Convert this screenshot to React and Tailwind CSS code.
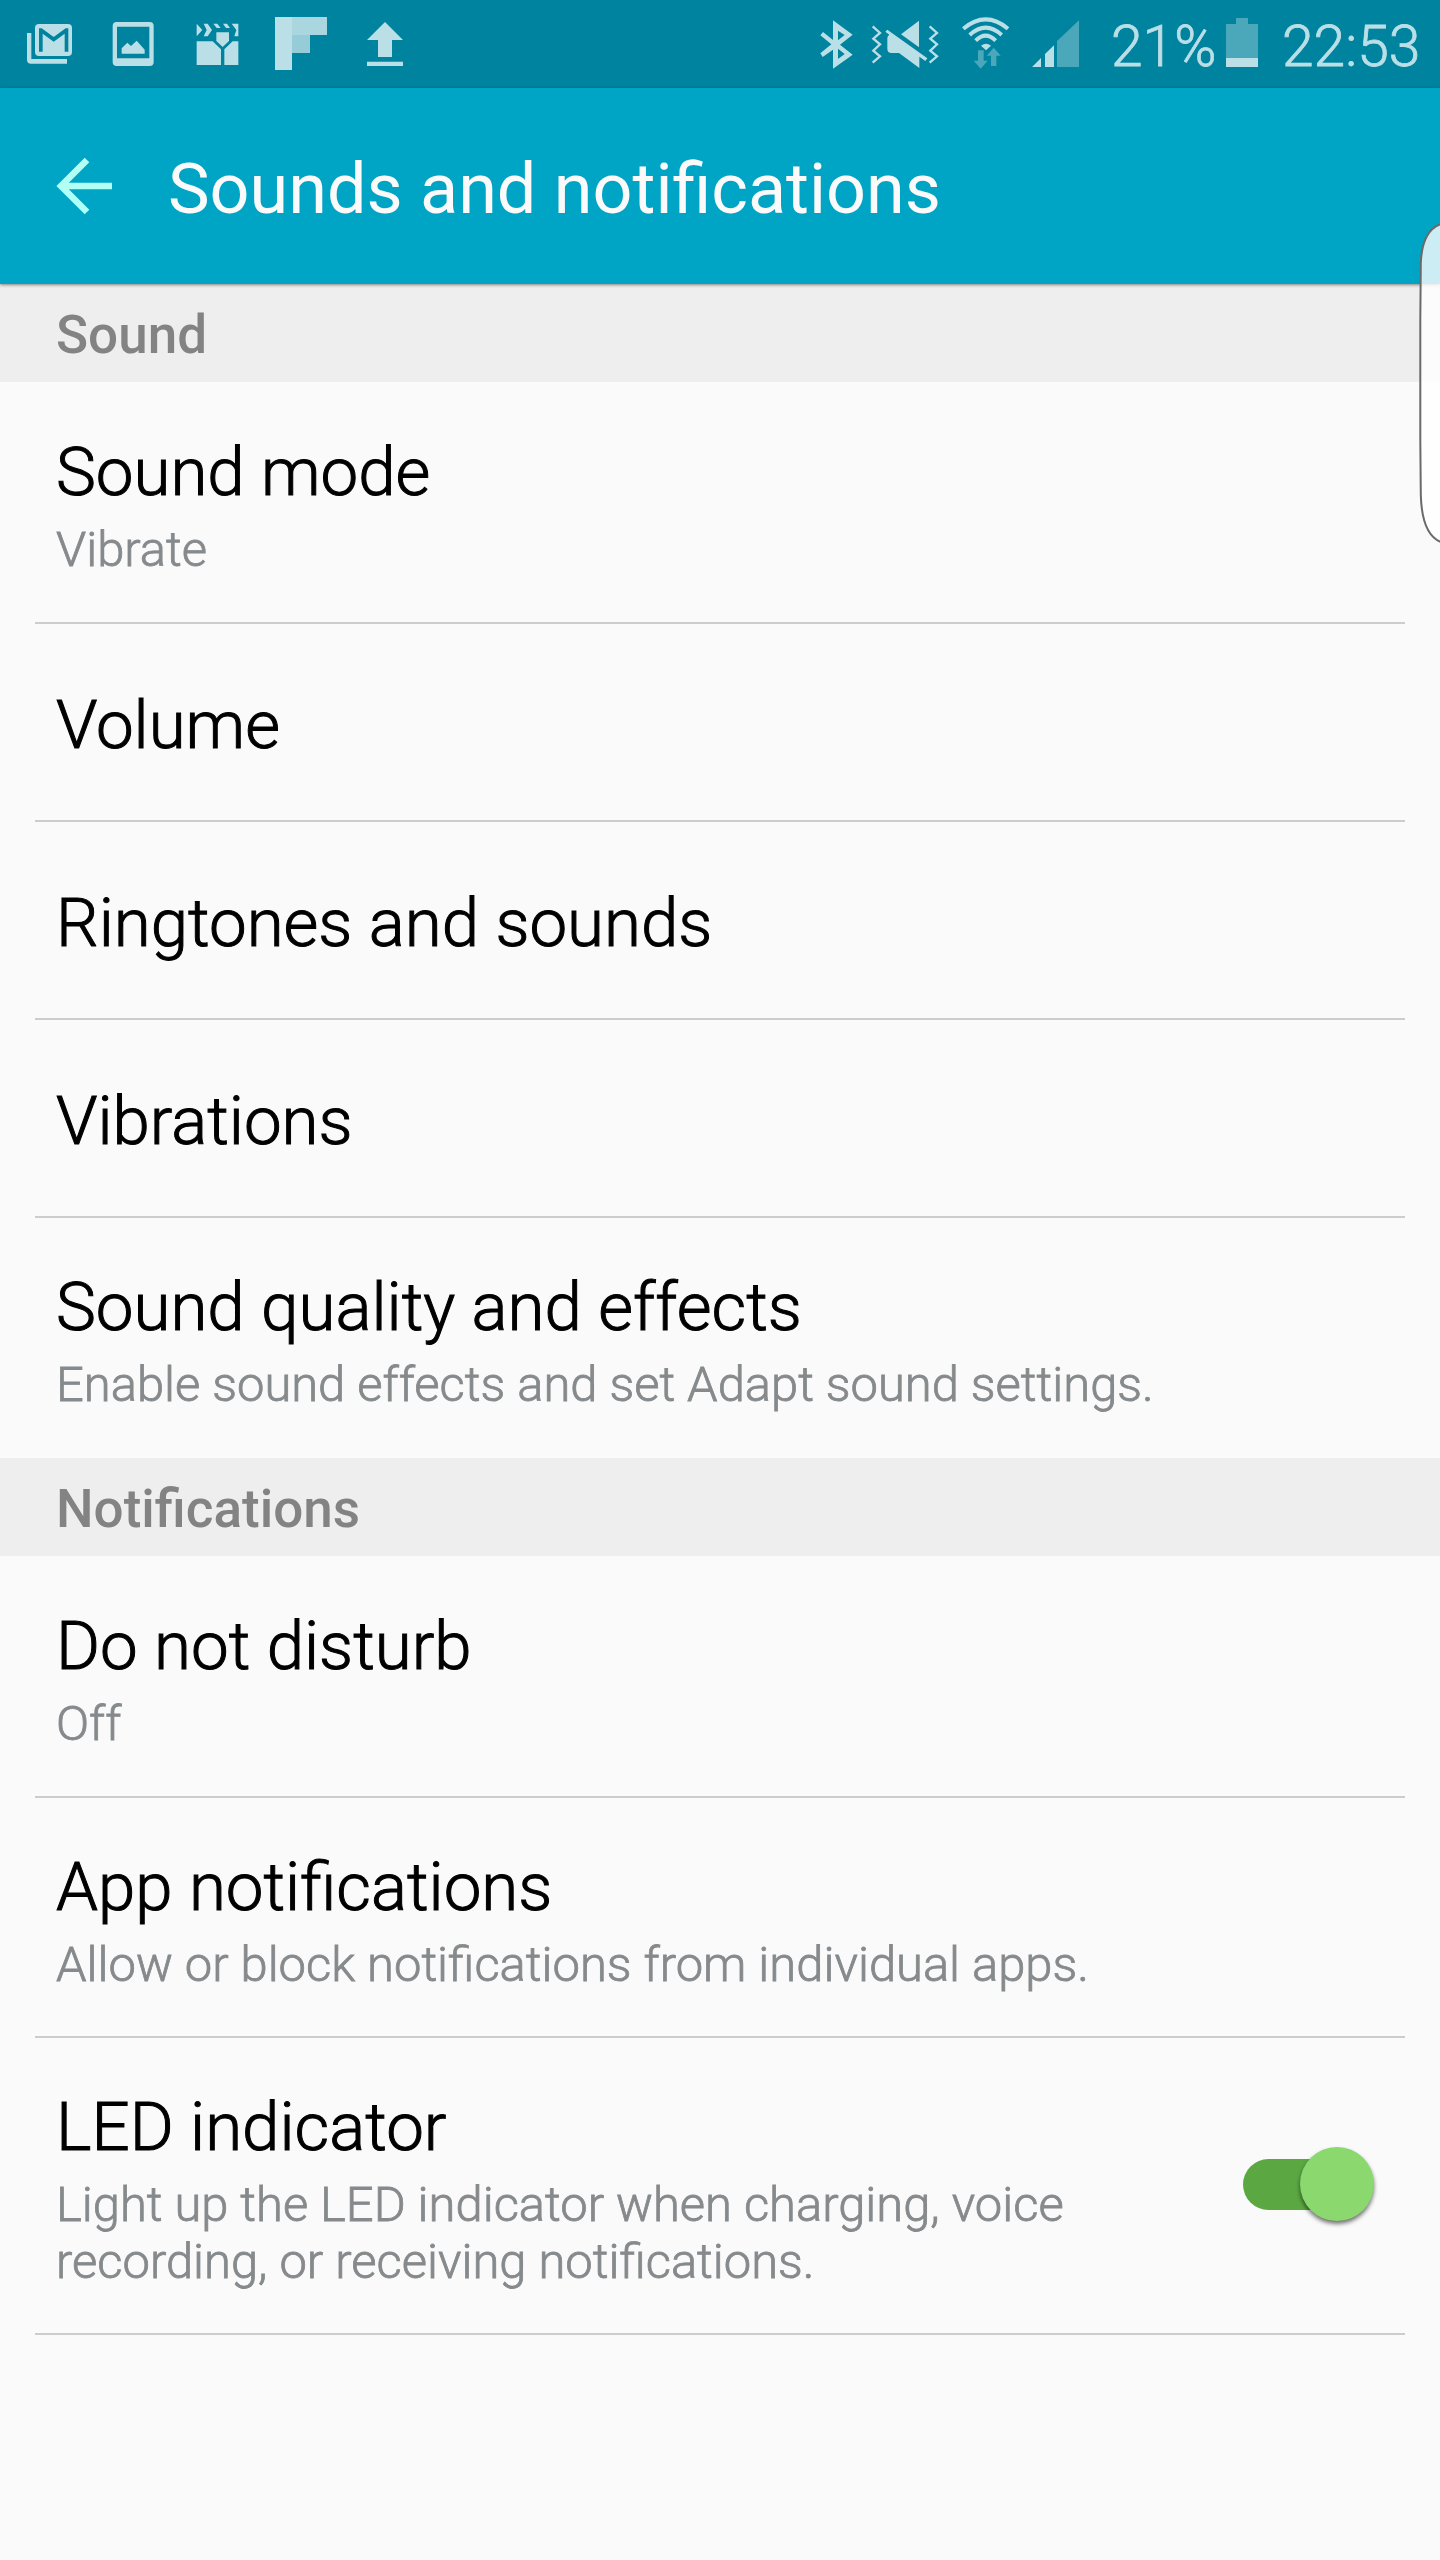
function StatusBar() {
  return (
    <div className="flex h-22 items-center bg-[#00839f] text-[#bbdfe6]">
      <svg className="shrink-0" width="440" height="88" viewBox="0 0 1320 264" fill="currentColor">
        {/* gmail */}
        <path d="M81 99h13v78h107v14H93q-12 0-12-12z" />
        <path fillRule="evenodd" d="M117 72h87q12 0 12 12v72q0 12-12 12h-87q-12 0-12-12V84q0-12 12-12zm0 13v70h11V101l33 24 33-24v54h11V85h-8l-36 26-36-26z" />
        {/* picture */}
        <path fillRule="evenodd" d="M350 66h99q12 0 12 12v108q0 12-12 12h-99q-12 0-12-12V78q0-12 12-12zm1 14v95h97V80z" />
        <path d="M365 161v-16l17-17 11 10 17-16 24 27v12z" />
        {/* movie edit */}
        <path d="M590 71l17 19-17 19zM611 71h12l13 19-13 19h-12l9-19zM640 71h12l10 13h-12zM669 71h12l9 13h-12zM695 71h20v38h-12l6-19zM649 97h38v26l-19 18-19-18zM590 124h48l25 24v47h-73zM715 124h-17l-25 24v47h42z" />
        {/* flipboard */}
        <path d="M825 51h51v159h-51z" />
        <path d="M876 51h105v54H876z" opacity=".9" />
        <path d="M876 105h54v54h-54z" opacity=".8" />
        {/* upload */}
        <path d="M1155 66l54 54h-33v51h-42v-51h-33zM1101 185h108v13h-108z" />
      </svg>
      <svg className="ml-[373px] shrink-0" width="290" height="88" viewBox="39 0 870 264" fill="currentColor">
        {/* bluetooth */}
        <path fillRule="evenodd" d="M99 61l59 43-38 30 38 30-59 42v-57l-31 22-7-11 33-27-33-27 8-10 30 24zm15 31v29l20-16zm0 54v31l20-15z" />
        {/* muted with vibration */}
        <path d="M218 79l22 20-20 17 20 17-20 19 20 17-22 19M389 79l22 20-20 17 20 17-20 19 20 17-22 19" fill="none" stroke="currentColor" strokeWidth="7" />
        <path d="M357 62v80l-54-39zM262 89l120 86-6 8-18-13v34l-61-45h-22q-13 0-13-13v-31q0-7 6-11l-12-9z" />
        {/* wifi */}
        <g fill="none" stroke="currentColor" strokeWidth="12">
          <path d="M490 86q67-56 134 0M509 105q48-44 96 0M527 122q30-30 60 0" />
        </g>
        <path d="M543 137q15-12 30 0l-15 14z" />
        <path d="M534 151h17v31h12l-21 24-21-24h13zM573 198v-31h-13l21-24 21 24h-13v31z" fill="#4ba7ba" />
        {/* signal */}
        <path d="M696 201l27-27v27zM735 201v-39l27-26v65z" />
        <path d="M771 201v-78l66-62v140z" fill="#4ba7ba" />
      </svg>
      <span className="ml-2 w-[115px] shrink-0 pt-1 text-[57px] leading-none font-light whitespace-nowrap [-webkit-text-stroke:0.8px]">21%</span>
      <svg className="shrink-0" width="32" height="88" viewBox="0 0 32 88">
        <path d="M0 24h10v-6h12v6h10v34H0z" fill="#4ba7ba" />
        <path d="M0 58h32v9H0z" fill="currentColor" />
      </svg>
      <span className="ml-6 shrink-0 pt-1 text-[57px] leading-none font-light whitespace-nowrap [-webkit-text-stroke:0.8px]">22:53</span>
    </div>
  );
}

function Header() {
  return (
    <header className="relative z-10 flex h-49 items-center bg-[#00a5c5] pl-14 shadow-[0_1px_3px_rgba(0,0,0,0.45)]">
      <svg width="58" height="58" viewBox="0 0 58 58" fill="none" stroke="#b2fff5" strokeWidth="6.5">
        <path d="M31 3L5 29l26 26M4 29h52" />
      </svg>
      <h1 className="ml-[54px] pt-1.5 text-[70.1px] leading-none font-normal text-[#fafafa]">Sounds and notifications</h1>
    </header>
  );
}

function SectionTitle({ children }) {
  return <h2 className="flex h-[98px] items-center bg-[#eeeeee] px-14 pt-1 text-[53px] leading-none font-medium text-[#838383]">{children}</h2>;
}

function Row({ title, desc, divider = true, className = "h-[240px]", children }) {
  return (
    <div className={`relative flex items-center px-14 ${className}`}>
      <div className="flex-1 pt-1">
        <h3 className="text-[67.2px] leading-[78px] font-light text-black [-webkit-text-stroke:1px]">{title}</h3>
        {desc && <p className="mt-[10px] text-[48.9px] leading-[57px] font-light text-[#868a8c] [-webkit-text-stroke:0.8px]">{desc}</p>}
      </div>
      {children}
      {divider && <div className="absolute inset-x-[35px] bottom-0 h-0.5 bg-[#cccccc]"></div>}
    </div>
  );
}

function Toggle() {
  return (
    <div className="relative mr-[10px] mb-[5px] h-[74px] w-[131px]">
      <div className="absolute top-3 left-0 h-[51px] w-[110px] rounded-full bg-[#5ba843]"></div>
      <div className="absolute top-0 right-0 size-[74px] rounded-full bg-[#8ad86e] shadow-[0_3px_4px_rgba(0,0,0,0.55)]"></div>
    </div>
  );
}

export default function App() {
  return (
    <div className="relative h-[2560px] w-[1440px] overflow-hidden bg-[#fafafa] font-[Roboto,sans-serif]">
      <StatusBar />
      <Header />
      <SectionTitle>Sound</SectionTitle>
      <Row title="Sound mode" desc="Vibrate" className="h-[242px]" />
      <Row title="Volume" className="h-[198px]" />
      <Row title="Ringtones and sounds" className="h-[198px]" />
      <Row title="Vibrations" className="h-[198px]" />
      <Row title="Sound quality and effects" desc="Enable sound effects and set Adapt sound settings." divider={false} />
      <SectionTitle>Notifications</SectionTitle>
      <Row title="Do not disturb" desc="Off" className="h-[242px]" />
      <Row title="App notifications" desc="Allow or block notifications from individual apps." />
      <Row title="LED indicator" desc="Light up the LED indicator when charging, voice recording, or receiving notifications." className="h-[297px]">
        <Toggle />
      </Row>

      {/* edge panel handle */}
      <svg className="absolute top-[220px] right-0 z-20" width="24" height="328" viewBox="0 0 24 328">
        <path d="M25 4C10 9 5.5 25 4.8 43L4.3 100V220L4.8 275C5.5 300 12 317 25 322" fill="#fff" fillOpacity=".8" stroke="#6a6a6a" strokeWidth="2" />
      </svg>
    </div>
  );
}
